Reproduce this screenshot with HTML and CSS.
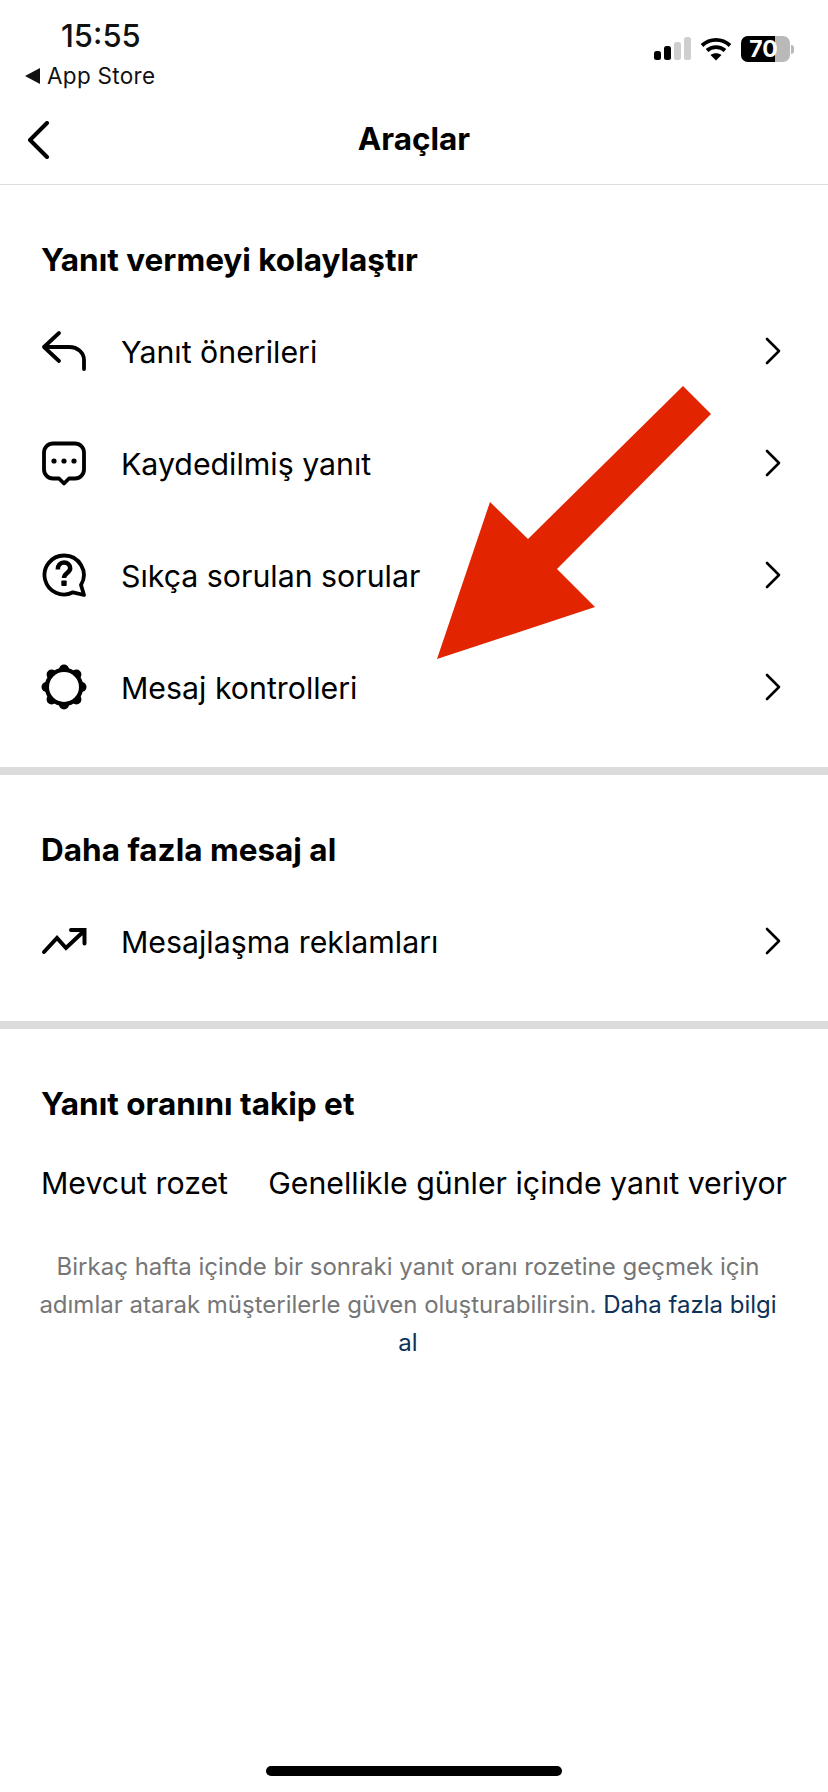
FILE: index.html
```html
<!DOCTYPE html>
<html lang="tr">
<head>
<meta charset="utf-8">
<title>Araçlar</title>
<link rel="stylesheet" href="styles.css">
</head>
<body>
<div class="screen">
  <header class="status">
    <div class="status-left">
      <div class="time">15:55</div>
      <div class="store"><span class="store-tri"></span><span>App Store</span></div>
    </div>
    <div class="status-right">
      <svg class="signal" width="38" height="24" viewBox="0 0 38 24">
        <rect x="0" y="14" width="7" height="9" rx="2.5" fill="#000"/>
        <rect x="10" y="9" width="7" height="14" rx="2.5" fill="#000"/>
        <rect x="20" y="5" width="7" height="18" rx="2.5" fill="#cfcfcf"/>
        <rect x="30" y="0" width="7" height="23" rx="2.5" fill="#cfcfcf"/>
      </svg>
      <svg class="wifi" width="32" height="24" viewBox="0 0 32 24">
        <path d="M2 8.5C10 1 22 1 30 8.5M7 13.5c5-4.500 13-4.500 18 0" fill="none" stroke="#000" stroke-width="3.800"/>
        <path d="M16 23.500l-5.500-5.500c3-2.500 8-2.500 11 0z" fill="#000"/>
      </svg>
      <div class="battery"><span class="battery-fill"></span><span class="battery-num">70</span></div>
      <span class="battery-nub"></span>
    </div>
  </header>

  <nav class="nav">
    <svg class="nav-back" width="24" height="38" viewBox="0 0 24 38">
      <path d="M21 2L4 19l17 17" fill="none" stroke="#000" stroke-width="4" stroke-linecap="round" stroke-linejoin="round"/>
    </svg>
    <h1 class="nav-title">Araçlar</h1>
  </nav>

  <section class="section section-first">
    <h2 class="section-title">Yanıt vermeyi kolaylaştır</h2>
    <div class="row">
      <svg class="icon" viewBox="0 0 46 46"><path d="M18 5L3 19l15 14M3 19h25c9 0 15 6 15 13v9" fill="none" stroke="#000" stroke-width="3.800" stroke-linecap="round" stroke-linejoin="round"/></svg>
      <span class="row-label">Yanıt önerileri</span>
      <svg class="chev" viewBox="0 0 16 28"><path d="M2 2l12 12L2 26" fill="none" stroke="#000" stroke-width="2.600" stroke-linecap="round" stroke-linejoin="round"/></svg>
    </div>
    <div class="row">
      <svg class="icon" viewBox="0 0 46 46">
        <path d="M12 3.500h22a9 9 0 0 1 9 9v17a9 9 0 0 1-9 9h-6l-5 5-5-5h-6a9 9 0 0 1-9-9v-17a9 9 0 0 1 9-9z" fill="none" stroke="#000" stroke-width="3.800" stroke-linejoin="round"/>
        <circle cx="13" cy="21" r="2.600"/><circle cx="23" cy="21" r="2.600"/><circle cx="33" cy="21" r="2.600"/>
      </svg>
      <span class="row-label">Kaydedilmiş yanıt</span>
      <svg class="chev" viewBox="0 0 16 28"><path d="M2 2l12 12L2 26" fill="none" stroke="#000" stroke-width="2.600" stroke-linecap="round" stroke-linejoin="round"/></svg>
    </div>
    <div class="row">
      <svg class="icon" viewBox="0 0 46 46">
        <path d="M23 3.500a19.500 19.500 0 1 0 9 36.800l11 2.700-3-10A19.500 19.500 0 0 0 23 3.500z" fill="none" stroke="#000" stroke-width="3.800" stroke-linejoin="round"/>
        <path d="M16.800 17.500c0-4.500 2.700-7 6.200-7s6.200 2.300 6.200 5.800c0 4.700-6.200 4.700-6.200 9.700" fill="none" stroke="#000" stroke-width="4.500"/>
        <rect x="20.300" y="28.500" width="5.400" height="5.400" rx="1"/>
      </svg>
      <span class="row-label">Sıkça sorulan sorular</span>
      <svg class="chev" viewBox="0 0 16 28"><path d="M2 2l12 12L2 26" fill="none" stroke="#000" stroke-width="2.600" stroke-linecap="round" stroke-linejoin="round"/></svg>
    </div>
    <div class="row">
      <svg class="icon" viewBox="0 0 46 46">
        <circle cx="23" cy="23" r="16.500" fill="#fff" stroke="#000" stroke-width="5.500"/>
        <circle cx="23" cy="5.500" r="5"/><circle cx="23" cy="40.500" r="5"/>
        <circle cx="5.500" cy="23" r="5"/><circle cx="40.500" cy="23" r="5"/>
        <circle cx="10.600" cy="10.600" r="5"/><circle cx="35.400" cy="10.600" r="5"/>
        <circle cx="10.600" cy="35.400" r="5"/><circle cx="35.400" cy="35.400" r="5"/>
        <circle cx="23" cy="23" r="15" fill="#fff"/>
      </svg>
      <span class="row-label">Mesaj kontrolleri</span>
      <svg class="chev" viewBox="0 0 16 28"><path d="M2 2l12 12L2 26" fill="none" stroke="#000" stroke-width="2.600" stroke-linecap="round" stroke-linejoin="round"/></svg>
    </div>
  </section>

  <section class="section section-second">
    <h2 class="section-title">Daha fazla mesaj al</h2>
    <div class="row">
      <svg class="icon" viewBox="0 0 46 46"><path d="M3 34l13-14 9 10 18-17M30 12h13.500v13.500" fill="none" stroke="#000" stroke-width="4" stroke-linecap="round"/></svg>
      <span class="row-label">Mesajlaşma reklamları</span>
      <svg class="chev" viewBox="0 0 16 28"><path d="M2 2l12 12L2 26" fill="none" stroke="#000" stroke-width="2.600" stroke-linecap="round" stroke-linejoin="round"/></svg>
    </div>
  </section>

  <section class="section-third">
    <h2 class="section-title">Yanıt oranını takip et</h2>
    <div class="badge-row">
      <span>Mevcut rozet</span>
      <span>Genellikle günler içinde yanıt veriyor</span>
    </div>
    <p class="note">Birkaç hafta içinde bir sonraki yanıt oranı rozetine geçmek için adımlar atarak müşterilerle güven oluşturabilirsin. <a class="note-link">Daha fazla bilgi al</a></p>
  </section>

  <div class="home-bar"></div>

  <svg class="red-arrow" width="828" height="1792" viewBox="0 0 828 1792">
    <polygon points="683,386 711,414 557,569 595,607 437,659 490,502 528,539" fill="#e32400"/>
  </svg>
</div>
</body>
</html>
```
FILE: styles.css
```css
* { box-sizing: border-box; }
html, body { margin: 0; padding: 0; background: #fff; }
body { font-family: Inter, "Noto Sans", "Liberation Sans", sans-serif; color: #000; }
.screen { position: relative; width: 828px; height: 1792px; overflow: hidden; background: #fff; display: flex; flex-direction: column; }

.status { height: 96px; flex: none; display: flex; justify-content: space-between; padding: 16px 34px 0 25px; }
.status-left { display: flex; flex-direction: column; }
.time { font-size: 31px; line-height: 40px; font-weight: 500; margin-left: 36px; color: #111; }
.store { display: flex; align-items: center; gap: 7px; font-size: 22.500px; line-height: 30px; margin-top: 5px; color: #111; letter-spacing: .3px; }
.store-tri { width: 0; height: 0; border-style: solid; border-width: 8px 15px 8px 0; border-color: transparent #111 transparent transparent; }
.status-right { display: flex; align-items: center; height: 46px; padding-top: 4px; margin-top: 8px; }
.signal { margin-right: 8px; }
.wifi { margin-right: 9px; }
.battery { position: relative; width: 49px; height: 26px; border-radius: 7px; background: #b9b9b9; overflow: hidden; display: flex; align-items: center; justify-content: center; }
.battery-fill { position: absolute; left: 0; top: 0; bottom: 0; width: 34px; background: #000; }
.battery-num { position: relative; color: #fff; font-size: 23px; font-weight: 700; line-height: 26px; margin-left: -4px; }
.battery-nub { width: 3px; height: 9px; margin-left: 1px; background: #b9b9b9; border-radius: 0 3px 3px 0; }

.nav { height: 89px; flex: none; display: flex; align-items: center; justify-content: center; position: relative; border-bottom: 1px solid #dedede; padding-bottom: 2px; }
.nav-back { position: absolute; left: 26px; top: 25px; }
.nav-title { margin: 0; font-size: 31.500px; line-height: 40px; font-weight: 700; }

.section { border-bottom: 8px solid #dbdbdb; flex: none; }
.section-first { padding: 50px 0 0; height: 590px; }
.section-second { padding: 50px 0 0; height: 254px; }
.section-title { margin: 0 0 10px; padding-left: 41px; font-size: 31.500px; line-height: 50px; font-weight: 700; }
.row { height: 112px; display: flex; align-items: center; padding: 0 47px 0 41px; }
.icon { width: 46px; height: 46px; flex: none; margin-right: 34px; }
.row-label { flex: 1; font-size: 30.300px; line-height: 40px; padding-top: 2px; }
.chev { width: 16px; height: 28px; flex: none; }

.section-third { padding-top: 50px; }
.section-third .section-title { margin-bottom: 29px; }
.badge-row { display: flex; justify-content: space-between; height: 50px; align-items: center; padding: 0 41px; font-size: 30.300px; }
.note { margin: 40px 0 0; padding: 0 46px 0 34px; text-align: center; font-size: 24px; line-height: 38px; color: #767676; }
.note-link { color: #0d3158; }

.home-bar { position: absolute; left: 266px; top: 1766px; width: 296px; height: 10px; border-radius: 5px; background: #000; }
.red-arrow { position: absolute; left: 0; top: 0; pointer-events: none; }
```
